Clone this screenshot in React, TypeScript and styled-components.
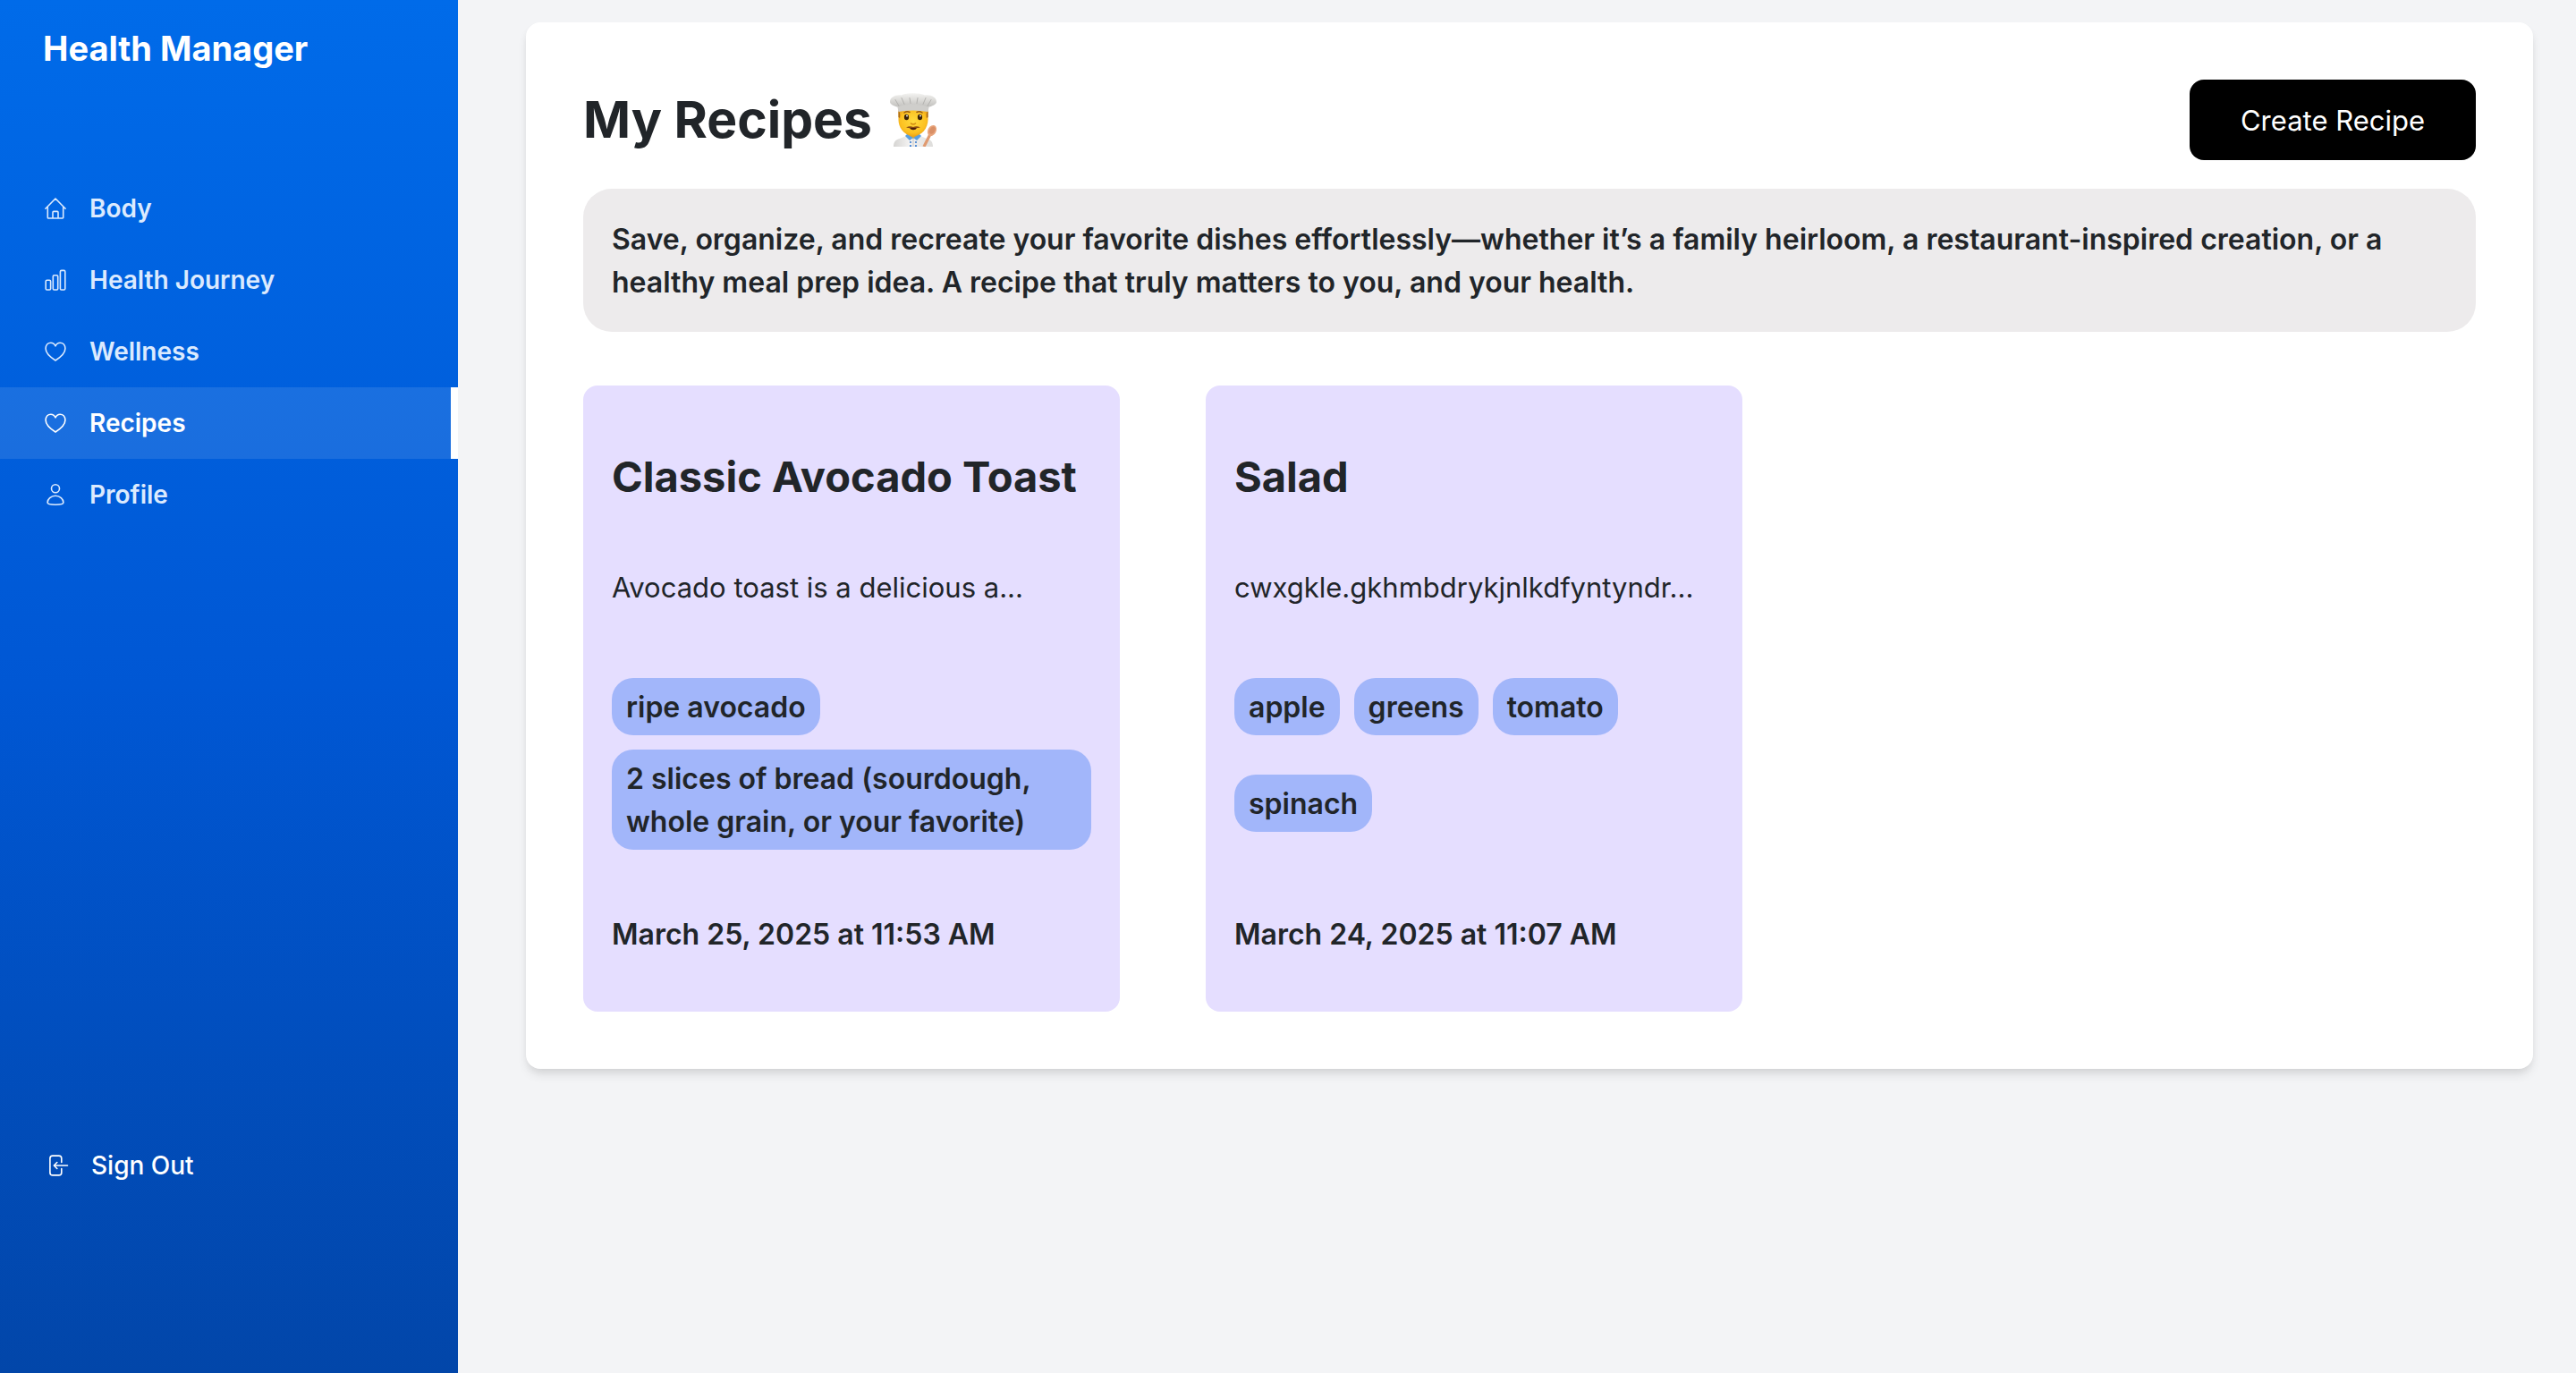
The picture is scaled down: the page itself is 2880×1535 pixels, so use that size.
import React from 'react';
import styled, { createGlobalStyle } from 'styled-components';

const GlobalStyle = createGlobalStyle`
  *, *::before, *::after { box-sizing: border-box; }
  body {
    margin: 0;
    background: #f3f4f6;
    color: #212529;
    font-family: Inter, "Liberation Sans", sans-serif;
    font-size: 32px;
    line-height: 48px;
    -webkit-font-smoothing: antialiased;
  }
  h1, h2, p, ul { margin: 0; padding: 0; }
  ul { list-style: none; }
`;

const Shell = styled.div`
  display: flex;
  min-height: 100vh;
`;

const Sidebar = styled.aside`
  display: flex;
  flex: 0 0 512px;
  flex-direction: column;
  justify-content: space-between;
  padding: 24px 0 200px;
  background: linear-gradient(180deg, #006be9 0%, #0057d4 50%, #0246a9 100%);
  color: #ffffff;
`;

const Brand = styled.p`
  padding: 0 48px;
  margin-bottom: 109px;
  font-size: 38px;
  font-weight: 700;
  line-height: 60px;
`;

const NavLink = styled.a<{ $active?: boolean }>`
  display: flex;
  align-items: center;
  gap: 26px;
  height: 80px;
  padding: 0 50px;
  border-right: 8px solid ${(p) => (p.$active ? '#ffffff' : 'transparent')};
  background: ${(p) => (p.$active ? 'rgba(255, 255, 255, 0.1)' : 'transparent')};
  background-clip: padding-box;
  color: ${(p) => (p.$active ? '#ffffff' : '#dbeafe')};
  font-size: 28px;
  font-weight: 600;
  text-decoration: none;
`;

const SignOutButton = styled.button`
  display: flex;
  align-items: center;
  gap: 24px;
  padding: 8px 54px;
  border: 0;
  background: transparent;
  color: #ffffff;
  font-family: inherit;
  font-size: 28px;
  font-weight: 500;
  line-height: 48px;
`;

const Icon = styled.svg`
  flex: none;
  width: 24px;
  height: 24px;
  fill: none;
  stroke: currentColor;
  stroke-width: 1.6;
  stroke-linecap: round;
  stroke-linejoin: round;
`;

const Main = styled.main`
  flex: 1;
  min-width: 0;
  padding: 25px 48px 48px 76px;
`;

const Panel = styled.section`
  padding: 64px;
  border-radius: 16px;
  background: #ffffff;
  box-shadow: 0 8px 12px -2px rgba(0, 0, 0, 0.1), 0 4px 8px -2px rgba(0, 0, 0, 0.06);
`;

const PanelHeader = styled.header`
  display: flex;
  align-items: center;
  justify-content: space-between;
  margin-bottom: 32px;
`;

const PanelTitle = styled.h1`
  display: flex;
  align-items: center;
  gap: 16px;
  font-size: 57px;
  font-weight: 700;
  line-height: 72px;
`;

const ChefIcon = styled.svg`
  width: 60px;
  height: 60px;
`;

const CreateButton = styled.button`
  min-width: 320px;
  height: 90px;
  padding: 0 48px;
  border: 0;
  border-radius: 16px;
  background: #000000;
  color: #ffffff;
  font-family: inherit;
  font-size: 31px;
  font-weight: 400;
`;

const Intro = styled.p`
  padding: 33px 32px 31px;
  margin-bottom: 60px;
  border-radius: 32px;
  background: #edebec;
  font-weight: 600;
`;

const RecipeGrid = styled.div`
  display: flex;
  flex-wrap: wrap;
  gap: 96px;
`;

const RecipeCard = styled.article`
  display: flex;
  flex-direction: column;
  width: 600px;
  min-height: 700px;
  padding: 72px 32px 62px;
  border-radius: 16px;
  background: #e5deff;
`;

const RecipeTitle = styled.h2`
  font-size: 47px;
  font-weight: 700;
  line-height: 60px;
`;

const Summary = styled.p`
  margin: 70px 0 77px;
  font-size: 31px;
`;

const Tags = styled.ul`
  display: flex;
  flex-wrap: wrap;
  align-content: space-between;
  gap: 16px;
  min-height: 172px;
`;

const Tag = styled.li`
  padding: 9px 16px 7px;
  border-radius: 24px;
  background: #a2b6fa;
  font-weight: 600;
`;

const Timestamp = styled.time`
  margin-top: auto;
  font-weight: 600;
`;

const HomeIcon = () => (
  <Icon viewBox="0 0 24 24" aria-hidden="true">
    <path d="M.9 12.2 12 1l11.100 11.200M3.300 10v12.200a.8.8 0 0 0 .8.8h15.800a.8.8 0 0 0 .8-.8V10M9 23v-6.600a1 1 0 0 1 1-1h4a1 1 0 0 1 1 1V23" />
  </Icon>
);

const BarsIcon = () => (
  <Icon viewBox="0 0 24 24" aria-hidden="true">
    <rect x="1.200" y="12.200" width="5.400" height="10.800" rx="1.300" />
    <rect x="9.300" y="6.800" width="5.400" height="16.200" rx="1.300" />
    <rect x="17.400" y="1.400" width="5.400" height="21.600" rx="1.300" />
  </Icon>
);

const HeartIcon = () => (
  <Icon viewBox="0 0 24 24" aria-hidden="true">
    <path d="M12 5.800C10.800 3.400 9.200 2.200 6.900 2.200 3.300 2.200 1.100 4.900 1.100 8.800c0 5.400 4.900 9.400 10.900 13.200 6-3.800 10.900-7.800 10.900-13.200 0-3.900-2.200-6.600-5.800-6.600-2.300 0-3.900 1.200-5.100 3.600Z" />
  </Icon>
);

const PersonIcon = () => (
  <Icon viewBox="0 0 24 24" aria-hidden="true">
    <circle cx="12" cy="5.300" r="4.500" />
    <path d="M12 13.300c-5 0-8.900 3.900-8.900 7.500 0 1.600 4 2.400 8.900 2.400s8.900-.8 8.900-2.400c0-3.600-3.900-7.500-8.900-7.500Z" />
  </Icon>
);

const SignOutIcon = () => (
  <Icon viewBox="0 0 24 24" aria-hidden="true">
    <path d="M14.800 8.400V4.100A3 3 0 0 0 11.800 1.100H4.900a3 3 0 0 0-3 3v15.800a3 3 0 0 0 3 3h6.900a3 3 0 0 0 3-3v-4.300M21.500 12H6.800M9.800 8.500 6.300 12l3.500 3.500" />
  </Icon>
);

const Chef = () => (
  <ChefIcon viewBox="0 0 60 60" role="img" aria-label="Chef">
    <defs>
      <linearGradient id="chefHat" x1="0" y1="0" x2="0" y2="1">
        <stop offset="0" stopColor="#f3f3f1" />
        <stop offset="0.55" stopColor="#d9d8d5" />
        <stop offset="1" stopColor="#c2c1be" />
      </linearGradient>
      <radialGradient id="chefFace" cx="0.5" cy="0.45" r="0.62">
        <stop offset="0" stopColor="#ffdb3d" />
        <stop offset="0.7" stopColor="#fcc021" />
        <stop offset="1" stopColor="#e79a12" />
      </radialGradient>
      <linearGradient id="chefCoat" x1="0" y1="0" x2="1" y2="0">
        <stop offset="0" stopColor="#d5d4d2" />
        <stop offset="0.4" stopColor="#f4f3f2" />
        <stop offset="1" stopColor="#dedddb" />
      </linearGradient>
    </defs>
    <path d="M8 60c0-5 2-8 7-9l7-3h16l7 3c5 1 7 4 7 9Z" fill="url(#chefCoat)" />
    <path d="M23 47l7 4 7-4v-5H23Z" fill="#e8a51c" />
    <path d="M23 46l7 4 7-4 2 2-5 5-4-3-4 3-5-5Z" fill="#5a9fe0" />
    <path d="M30 51v9" stroke="#c9c8c6" strokeWidth="1" />
    <g fill="#3e7fd0">
      <circle cx="27" cy="55" r="1.100" /><circle cx="33" cy="55" r="1.100" />
      <circle cx="27" cy="59" r="1.100" /><circle cx="33" cy="59" r="1.100" />
    </g>
    <path d="M13.500 18h33v12c0 9-7 18-16.500 18s-16.500-9-16.500-18Z" fill="url(#chefFace)" />
    <path d="M13.500 20c2 2 2 5 1.500 8l-1.500-1ZM46.500 20c-2 2-2 5-1.500 8l1.500-1Z" fill="#a96a18" />
    <path d="M20 22q3-2 6-.5M34 21.500q3-1.500 6 .5" fill="none" stroke="#9a5c14" strokeWidth="1.500" strokeLinecap="round" />
    <ellipse cx="22.500" cy="27" rx="2.600" ry="3.300" fill="#3a2208" />
    <ellipse cx="37.500" cy="27" rx="2.600" ry="3.300" fill="#3a2208" />
    <circle cx="23" cy="25.500" r=".9" fill="#ffffff" /><circle cx="38" cy="25.500" r=".9" fill="#ffffff" />
    <path d="M27.500 34q2.500 2 5 0" fill="none" stroke="#d18a12" strokeWidth="1.600" strokeLinecap="round" />
    <path d="M22 38.500q4-2 8-.6 4-1.400 8 .6-4 1-8 .6-4 .4-8-.6Z" fill="#8a4b12" />
    <path d="M26 39h8q-1 2.200-4 2.200T26 39Z" fill="#4a1d0a" />
    <path d="M11.500 11h37l-2 10q-16.500-3-33 0Z" fill="#cfcecb" />
    <path d="M4 10C4 5 10 1.500 17 2.500 22-.5 38-.5 43 2.500 50 1.500 56 5 56 10c0 2-3 4-8 5.500Q30 10 12 15.500C7 14 4 12 4 10Z" fill="url(#chefHat)" />
    <path d="M14 14.500l-4-7M20 12.500l-3-7M27 11.500l-1-6M34 11.500l1-6M41 12.500l3-7M46 14.500l4-7" stroke="#b3b2af" strokeWidth="1" strokeLinecap="round" />
    <path d="M42 60l6.500-13" stroke="#e09a70" strokeWidth="3.200" strokeLinecap="butt" />
    <ellipse cx="51" cy="42" rx="4.600" ry="6.400" transform="rotate(28 51 42)" fill="#e8a47c" />
    <ellipse cx="51.300" cy="41.600" rx="2.800" ry="4.400" transform="rotate(28 51.300 41.600)" fill="#d98f66" />
  </ChefIcon>
);

const navItems = [
  { label: 'Body', Glyph: HomeIcon },
  { label: 'Health Journey', Glyph: BarsIcon },
  { label: 'Wellness', Glyph: HeartIcon },
  { label: 'Recipes', Glyph: HeartIcon, active: true },
  { label: 'Profile', Glyph: PersonIcon },
];

const recipes = [
  {
    title: 'Classic Avocado Toast',
    summary: 'Avocado toast is a delicious a...',
    tags: ['ripe avocado', '2 slices of bread (sourdough, whole grain, or your favorite)'],
    date: 'March 25, 2025 at 11:53 AM',
    iso: '2025-03-25T11:53',
  },
  {
    title: 'Salad',
    summary: 'cwxgkle.gkhmbdrykjnlkdfyntyndr...',
    tags: ['apple', 'greens', 'tomato', 'spinach'],
    date: 'March 24, 2025 at 11:07 AM',
    iso: '2025-03-24T11:07',
  },
];

export default function App() {
  return (
    <>
      <GlobalStyle />
      <Shell>
        <Sidebar>
          <div>
            <Brand>Health Manager</Brand>
            <nav aria-label="Main">
              {navItems.map(({ label, Glyph, active }) => (
                <NavLink key={label} href={'#' + label} $active={active} aria-current={active ? 'page' : undefined}>
                  <Glyph />
                  {label}
                </NavLink>
              ))}
            </nav>
          </div>
          <SignOutButton type="button">
            <SignOutIcon />
            Sign Out
          </SignOutButton>
        </Sidebar>
        <Main>
          <Panel>
            <PanelHeader>
              <PanelTitle>
                My Recipes
                <Chef />
              </PanelTitle>
              <CreateButton type="button">Create Recipe</CreateButton>
            </PanelHeader>
            <Intro>
              Save, organize, and recreate your favorite dishes effortlessly—whether it’s a family heirloom, a
              restaurant-inspired creation, or a healthy meal prep idea. A recipe that truly matters to you, and your
              health.
            </Intro>
            <RecipeGrid>
              {recipes.map((recipe) => (
                <RecipeCard key={recipe.title}>
                  <RecipeTitle>{recipe.title}</RecipeTitle>
                  <Summary>{recipe.summary}</Summary>
                  <Tags>
                    {recipe.tags.map((tag) => (
                      <Tag key={tag}>{tag}</Tag>
                    ))}
                  </Tags>
                  <Timestamp dateTime={recipe.iso}>{recipe.date}</Timestamp>
                </RecipeCard>
              ))}
            </RecipeGrid>
          </Panel>
        </Main>
      </Shell>
    </>
  );
}
